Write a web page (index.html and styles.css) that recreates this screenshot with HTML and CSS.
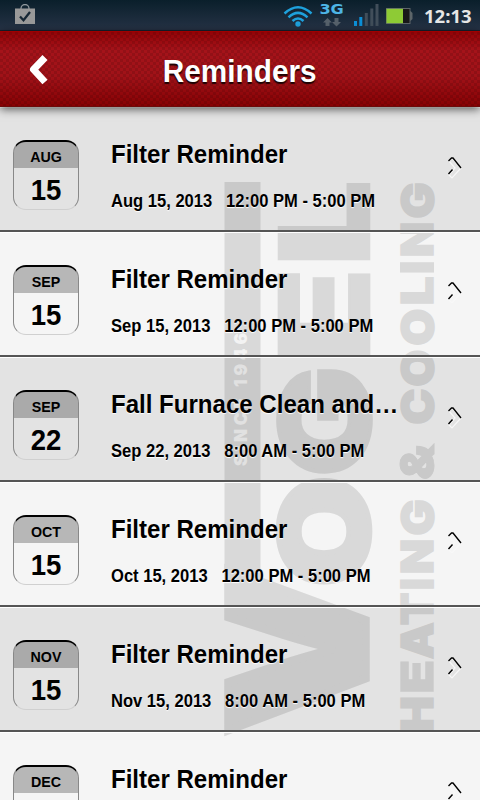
FILE: index.html
```html
<!DOCTYPE html>
<html lang="en">
<head>
    <meta charset="UTF-8">
    <meta name="viewport" content="width=device-width, initial-scale=1.0">
    <title>Reminders</title>
    <link rel="stylesheet" href="styles.css">
</head>
<body>

<div class="statusbar">
    <svg class="bag" width="20" height="21" viewBox="0 0 20 21">
        <path d="M6 6V4.500a4 4 0 0 1 8 0V6" fill="none" stroke="#8f979c" stroke-width="1.300"/>
        <rect x="0" y="4.500" width="20" height="15.500" fill="#999"/>
        <path d="M5 12.500l3.500 3.700L15 8" fill="none" stroke="#172734" stroke-width="2.300"/>
    </svg>
    <svg class="wifi" width="30" height="22" viewBox="0 0 30 22">
        <g fill="none" stroke="#1ea1dc" stroke-width="2.500">
            <path d="M1.500 8.500Q15 -4 28.500 8.500"/>
            <path d="M5.500 12.300Q15 3.500 24.500 12.300"/>
            <path d="M9.500 16Q15 11 20.500 16"/>
        </g>
        <circle cx="15" cy="19" r="2.700" fill="#1ea1dc"/>
    </svg>
    <div class="network">
        <span>3G</span>
        <svg width="18" height="9" viewBox="0 0 18 9" fill="#56616b">
            <path d="M4.500 0L9 4.500H6.500V8h-4V4.500H0z"/>
            <path d="M13.500 8.500L18 4H15.500V0h-4v4H9z"/>
        </svg>
    </div>
    <svg class="signal" width="25" height="22" viewBox="0 0 25 22">
        <path d="M0 17h3v5H0zM5.300 13h3v9h-3z" fill="#0c90d8"/>
        <path d="M10.800 9h3v13h-3zM16.300 4.500h3V22h-3zM21.500 0h3v22h-3z" fill="#414e5a"/>
    </svg>
    <svg class="battery" width="27" height="16" viewBox="0 0 27 16">
        <path d="M0 0H24.500V3L26.500 5V11L24.500 13V16H0z" fill="#5d6569"/>
        <rect x="17" y="1" width="6.500" height="14" fill="#191919"/>
        <rect x="0.500" y="0.800" width="16.500" height="14.400" fill="#8ecb35"/>
    </svg>
    <span class="clock">12:13</span>
</div>

<div class="header">
    <svg class="back" width="20" height="32" viewBox="0 0 20 32">
        <path d="M16 3.500L4.500 15.500L16 28" fill="none" stroke="#fff" stroke-width="7" stroke-linejoin="round"/>
    </svg>
    <h1><span>Reminders</span></h1>
</div>

<div class="list">
    <svg class="watermark" id="watermark" width="480" height="693" viewBox="0 107 480 693">
        <rect x="224.500" y="182" width="36" height="400"/>
        <text class="since" transform="translate(247 466) rotate(-90)" textLength="133">SINCE 1946</text>
    </svg>

    <div class="row">
        <div class="cal"><div class="month">AUG</div><div class="day">15</div></div>
        <div class="info">
            <h2>Filter Reminder</h2>
            <p>Aug 15, 2013 &nbsp; 12:00 PM - 5:00 PM</p>
        </div>
    </div>
    <div class="row">
        <div class="cal"><div class="month">SEP</div><div class="day">15</div></div>
        <div class="info">
            <h2>Filter Reminder</h2>
            <p>Sep 15, 2013 &nbsp; 12:00 PM - 5:00 PM</p>
        </div>
    </div>
    <div class="row">
        <div class="cal"><div class="month">SEP</div><div class="day">22</div></div>
        <div class="info">
            <h2>Fall Furnace Clean and…</h2>
            <p>Sep 22, 2013 &nbsp; 8:00 AM - 5:00 PM</p>
        </div>
    </div>
    <div class="row">
        <div class="cal"><div class="month">OCT</div><div class="day">15</div></div>
        <div class="info">
            <h2>Filter Reminder</h2>
            <p>Oct 15, 2013 &nbsp; 12:00 PM - 5:00 PM</p>
        </div>
    </div>
    <div class="row">
        <div class="cal"><div class="month">NOV</div><div class="day">15</div></div>
        <div class="info">
            <h2>Filter Reminder</h2>
            <p>Nov 15, 2013 &nbsp; 8:00 AM - 5:00 PM</p>
        </div>
    </div>
    <div class="row">
        <div class="cal"><div class="month">DEC</div></div>
        <div class="info">
            <h2>Filter Reminder</h2>
        </div>
    </div>
</div>

<script src="script.js"></script>
</body>
</html>
```
FILE: styles.css
```css
* { box-sizing: border-box; }
body { margin: 0; height: 800px; overflow: hidden; background: #f5f5f5; font-family: "Liberation Sans", Arial, sans-serif; color: #000; }

.statusbar { height: 31px; display: flex; align-items: flex-start; padding-left: 15px; background: linear-gradient(#0a1f2b, #253245 95%, #101923); }
.bag { margin-top: 4px; }
.wifi { margin: 5px 0 0 248px; }
.network { width: 26px; margin: 4px 0 0 6px; display: flex; flex-direction: column; align-items: center; }
.network span { font: bold 14px/11px "DejaVu Sans", sans-serif; color: #4db5e6; transform: scaleX(1.15); margin-bottom: 3px; }
.signal { margin: 4px 0 0 9px; }
.battery { margin: 8px 0 0 7px; }
.clock { margin: 4px 0 0 11px; font: bold 18.5px/24px "Open Sans", sans-serif; color: #e6e6e6; }

.header { position: relative; z-index: 2; height: 76px; display: flex; align-items: center; background: repeating-conic-gradient(rgba(0,0,0,0.11) 0 25%, transparent 0 50%) 0 0 / 6px 6px, linear-gradient(#930307, #a5131a 25%, #a01218 60%, #870104); border-top: 1px solid #a00000; border-bottom: 1px solid #6d0a0a; box-shadow: 0 2px 9px rgba(0,0,0,0.65); }
.back { margin: 2px 0 0 29px; }
h1 { margin: 4px 0 0 0; width: 382px; text-align: center; font-size: 32px; line-height: 40px; color: #fff; text-shadow: 0 2px 1px rgba(0,0,0,0.8); }
h1 span { display: inline-block; transform: scaleX(0.93); }

.list { position: relative; height: 693px; overflow: hidden; }
.watermark { position: absolute; left: 0; top: 0; fill: #d9d9d9; font: 900 100px Inter, sans-serif; }
.watermark .letter { stroke: #d9d9d9; vector-effect: non-scaling-stroke; }
.watermark .since { fill: #f3f3f3; font: 900 17px Inter, sans-serif; }

.row { position: relative; height: 125px; display: flex; align-items: flex-start; padding: 33px 17px 0 13px; border-bottom: 2px solid #555; box-shadow: inset 0 1px #fff; }
.row:nth-of-type(odd) { background: rgba(0,0,0,0.07); }

.cal { width: 66px; height: 70px; border-radius: 13px; border: 1px solid #888; border-top: 2px solid #000; border-bottom-color: #d0d0d0; overflow: hidden; text-align: center; font-weight: bold; }
.month { margin: 0 -3px; height: 26px; background: rgba(0,0,0,0.25); font-size: 15.5px; line-height: 29px; transform: scaleX(0.92); }
.day { font-size: 29px; line-height: 44px; transform: scaleX(0.95); }

.info { flex: 1; margin-left: 32px; white-space: nowrap; }
h2 { margin: -1px 0 0; font-size: 26px; line-height: 30px; transform: scaleX(0.925); transform-origin: 0 0; text-shadow: 0 1px 1px #fff; }
p { margin: 22px 0 0; font-size: 17.5px; font-weight: bold; line-height: 20px; transform: scaleX(0.946); transform-origin: 0 0; text-shadow: 0 1px 1px #fff; }
.arrow { margin-top: 16px; }
```
FILE: script.js
```js
// logo letters, read from bottom to top: [letter, left, top, right, bottom, stroke]
const letters = [
    ['V', 224, 564, 370, 735, 8], ['O', 275, 477, 373, 585, 5], ['G', 275, 369, 373, 474, 4], ['E', 277, 272, 370, 357, 3], ['L', 277, 183, 370, 261, 5],
    ['H', 400, 697, 434, 731, 1.5], ['E', 400, 661, 434, 692, 1.5], ['A', 400, 622, 434, 659, 1.5], ['T', 400, 593, 434, 625, 1.5], ['I', 400, 579, 434, 589, 0], ['N', 400, 540, 434, 573, 1.5], ['G', 399, 500, 435, 535, 1.5],
    ['&', 399, 443, 435, 479, 1],
    ['C', 399, 389, 435, 424, 1.5], ['O', 399, 350, 435, 386, 1.5], ['O', 399, 309, 435, 345, 1.5], ['L', 400, 277, 434, 304, 1.5], ['I', 400, 262, 434, 273, 0], ['N', 400, 223, 434, 256, 1.5], ['G', 399, 183, 435, 218, 1.5]
];

const logo = document.getElementById('watermark');
const since = logo.querySelector('.since');
const ctx = document.createElement('canvas').getContext('2d');
ctx.font = '900 100px Inter, sans-serif';

letters.forEach(([ch, left, top, right, bottom, stroke]) => {
    const m = ctx.measureText(ch);
    // the stroke grows the letter by half its width on each side
    const h = stroke / 2;
    const sy = (right - left - stroke) / (m.actualBoundingBoxAscent + m.actualBoundingBoxDescent);
    const sx = (bottom - top - stroke) / (m.actualBoundingBoxLeft + m.actualBoundingBoxRight);
    const tx = left + h + m.actualBoundingBoxAscent * sy;
    const ty = bottom - h - m.actualBoundingBoxLeft * sx;
    const text = document.createElementNS('http://www.w3.org/2000/svg', 'text');
    text.textContent = ch;
    text.setAttribute('class', 'letter');
    text.setAttribute('stroke-width', stroke);
    text.setAttribute('transform', `translate(${tx} ${ty}) rotate(-90) scale(${sx} ${sy})`);
    logo.insertBefore(text, since);
});

// arrow at the right end of every row
document.querySelectorAll('.row').forEach(row => {
    row.insertAdjacentHTML('beforeend', `
        <svg class="arrow" width="16" height="24" viewBox="0 0 16 24" fill="none">
            <path d="M2 5L5 2L14 12L5 22L2 19L8 12Z" stroke="#f8f8f8" stroke-width="1.200"/>
            <path d="M1.500 5L4.500 2H6L14 12M1.500 18L5.500 13.500" stroke="#000" stroke-width="1.400"/>
        </svg>`);
});
```
